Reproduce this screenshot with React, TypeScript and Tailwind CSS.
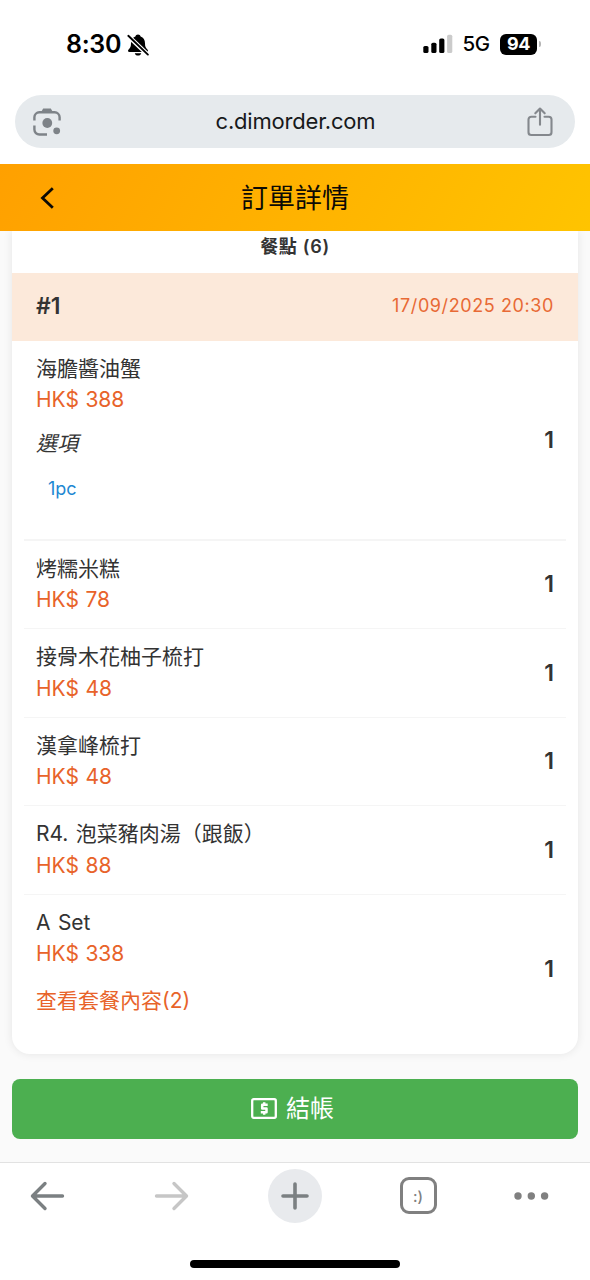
import React from 'react'

type OrderItem = {
  name: string
  price: string
  qty: number
  option?: string
  setLabel?: string
  rowClass: string
}

const items: OrderItem[] = [
  {
    name: '海膽醬油蟹',
    price: 'HK$ 388',
    qty: 1,
    option: '1pc',
    rowClass: 'h-[200px] border-b-2'
  },
  { name: '烤糯米糕', price: 'HK$ 78', qty: 1, rowClass: 'h-[88.5px] border-b' },
  {
    name: '接骨木花柚子梳打',
    price: 'HK$ 48',
    qty: 1,
    rowClass: 'h-[88.5px] border-b'
  },
  {
    name: '漢拿峰梳打',
    price: 'HK$ 48',
    qty: 1,
    rowClass: 'h-[88.5px] border-b'
  },
  {
    name: 'R4. 泡菜豬肉湯（跟飯）',
    price: 'HK$ 88',
    qty: 1,
    rowClass: 'h-[88.5px] border-b'
  },
  {
    name: 'A Set',
    price: 'HK$ 338',
    qty: 1,
    setLabel: '查看套餐內容(2)',
    rowClass: 'h-[148px]'
  }
]

const BellOffIcon = () => (
  <svg width="24" height="24" viewBox="0 0 24 24">
    <path
      fill="#000"
      d="M12 1.4c-1.300 0-2.400.9-2.600 2C6.500 4.500 5 7 5 10.200c0 3.400-.7 4.500-2.400 6.300-1 1.100-.7 2.500.9 2.500h17c1.600 0 1.900-1.400.9-2.500-1.700-1.800-2.400-2.900-2.400-6.300 0-3.200-1.500-5.700-4.400-6.800-.2-1.100-1.300-2-2.600-2zM8.800 20.300c.3 1.500 1.600 2.300 3.200 2.300s2.900-.8 3.200-2.300z"
    />
    <path stroke="#fff" strokeWidth="4.400" d="M1.500 2.300 22.800 22.600" />
    <path stroke="#000" strokeWidth="1.900" strokeLinecap="round" d="M2.300 2.800 21.900 21.600" />
  </svg>
)

const SignalIcon = () => (
  <svg width="30" height="20" viewBox="0 0 30 20">
    <rect x="0.3" y="12" width="5.2" height="7" rx="1.6" />
    <rect x="8.3" y="8.7" width="5.2" height="10.3" rx="1.6" />
    <rect x="16.2" y="4.5" width="5.2" height="14.5" rx="1.6" />
    <rect x="24.1" y="0.7" width="5.2" height="18.3" rx="1.6" fill="#cbcbcb" />
  </svg>
)

const LensIcon = () => (
  <svg width="28" height="28" viewBox="0 0 28 28" fill="none" stroke="#7e8388" strokeWidth="2.4">
    <path d="M1.400 12.500V9.300a5 5 0 0 1 5-5h15.200a5 5 0 0 1 5 5v3.200" />
    <path d="M1.400 17.500v4a5 5 0 0 0 5 5H14" />
    <path d="M8 4.300 10.200.5h7.600L20 4.300z" fill="#7e8388" stroke="none" />
    <circle cx="14.300" cy="15" r="4.900" fill="#7e8388" stroke="none" />
    <circle cx="23.700" cy="22.800" r="3.400" fill="#7e8388" stroke="none" />
  </svg>
)

const ShareIcon = () => (
  <svg
    width="26"
    height="30"
    viewBox="0 0 26 30"
    fill="none"
    stroke="#84888d"
    strokeWidth="2.1"
    strokeLinecap="round"
    strokeLinejoin="round"
  >
    <path d="M8.500 9.700H4.300a2.800 2.800 0 0 0-2.800 2.800v12.700A2.800 2.800 0 0 0 4.300 28h17.400a2.800 2.800 0 0 0 2.800-2.800V12.500a2.800 2.800 0 0 0-2.800-2.800H17.500" />
    <path d="M13 17.800V1.800M8.300 6.300 13 1.500l4.700 4.800" />
  </svg>
)

const StatusBar = () => (
  <div className="flex h-[95px] items-start justify-between pt-[31px] pr-[49px] pl-[66px]">
    <div className="flex h-[27px] items-center gap-[5px]">
      <span className="text-[25px] leading-none font-semibold tracking-[-0.3px]">8:30</span>
      <BellOffIcon />
    </div>
    <div className="flex h-[26px] items-center">
      <SignalIcon />
      <span className="ml-[9px] text-[20.5px] leading-none font-medium tracking-[-0.2px]">5G</span>
      <span className="ml-[10px] flex h-[21px] w-[37px] items-center justify-center rounded-[6px] bg-black text-[18px] leading-none font-bold tracking-[-0.5px] text-white">
        94
      </span>
      <span className="ml-[2px] h-[6px] w-[2px] rounded-r-full bg-[#b5b5b5]" />
    </div>
  </div>
)

const AddressBar = () => (
  <div className="mx-[15px] flex h-[53px] items-center justify-between rounded-full bg-[#e6eaed] pr-[22px] pl-[18px]">
    <LensIcon />
    <span className="pb-[2px] pl-[3px] text-[22px] leading-none tracking-[-0.2px] text-[#17191b]">
      c.dimorder.com
    </span>
    <ShareIcon />
  </div>
)

const PageHeader = () => (
  <header className="mt-[15.5px] flex h-[67.5px] items-center bg-linear-[120deg,#ffa000,#ffc400] px-[36px]">
    <svg width="22" height="25" viewBox="0 0 22 25" fill="none" stroke="#0c0a05" strokeWidth="2.8">
      <path d="M16.800 3.200 6.500 13l10.300 9.800" />
    </svg>
    <h1 className="mr-[22px] flex-1 pt-[2px] text-center text-[27px] leading-none text-[#0c0a05]">
      訂單詳情
    </h1>
  </header>
)

const ItemRow = ({ item }: { item: OrderItem }) => (
  <li
    className={`mx-3 flex items-center justify-between border-[#f5f5f5] px-3 ${item.rowClass}`}
  >
    <div className="h-full pt-[12px] text-[21px] leading-[31.5px]">
      <p className="text-[#333] [word-spacing:1.5px]">{item.name}</p>
      <p className="text-[#e8632a] [word-spacing:0.5px]">{item.price}</p>
      {item.option && (
        <>
          <p className="mt-[12px] text-[#333] italic">選項</p>
          <p className="mt-[14px] ml-[12px] text-[18px] text-[#1e88d2]">{item.option}</p>
        </>
      )}
      {item.setLabel && <p className="mt-[15px] text-[#e8632a]">{item.setLabel}</p>}
    </div>
    <span className="pt-[1px] text-[23px] leading-none font-semibold text-[#333]">{item.qty}</span>
  </li>
)

const OrderCard = () => (
  <section className="mx-3 h-[822.5px] overflow-hidden rounded-b-[18px] bg-white shadow-[0_0_10px_rgba(0,0,0,0.09)]">
    <h2 className="h-[42px] pt-[3px] text-center text-[18px] leading-[26px] font-semibold tracking-[0.7px] text-[#333]">
      餐點 (6)
    </h2>
    <div className="flex h-[67.5px] items-center justify-between bg-[#fce9da] px-6 pb-[1px]">
      <span className="text-[23px] leading-none font-semibold text-[#333]">#1</span>
      <span className="text-[18px] leading-none tracking-[0.6px] text-[#e86a35]">
        17/09/2025 20:30
      </span>
    </div>
    <ul>
      {items.map((item) => (
        <ItemRow key={item.name} item={item} />
      ))}
    </ul>
  </section>
)

const CheckoutButton = () => (
  <button className="mx-3 mt-[25px] flex h-[60px] items-center justify-center gap-[9px] rounded-[8px] bg-[#4caf50] pr-[5px] text-[24px] leading-none text-white">
    <svg width="26" height="21" viewBox="0 0 26 21" fill="none" stroke="#fff">
      <rect x="1.200" y="1.200" width="23.600" height="18.600" rx="1.500" strokeWidth="2.300" />
      <path
        d="M16.700 6.800h-5.500v3.700h4.300v3.700H9.800M13.200 4.300v2.500M13.200 14v2.700"
        strokeWidth="2.500"
        strokeLinejoin="round"
      />
    </svg>
    結帳
  </button>
)

const BottomBar = () => (
  <nav className="flex h-[118px] flex-col items-center border-t border-[#e2e2e2] bg-white">
    <div className="grid h-[65px] w-full grid-cols-[94px_154px_94px_152px_74px] place-items-center">
      <svg
        width="35"
        height="30"
        viewBox="0 0 35 30"
        fill="none"
        stroke="#7b8082"
        strokeWidth="3.4"
        strokeLinecap="round"
        strokeLinejoin="round"
      >
        <path d="M32.500 15H2.800M15 2.500 2.500 15 15 27.500" />
      </svg>
      <svg
        width="35"
        height="30"
        viewBox="0 0 35 30"
        fill="none"
        stroke="#c6c6c6"
        strokeWidth="3.4"
        strokeLinecap="round"
        strokeLinejoin="round"
      >
        <path d="M2.500 15h29.700M20 2.500 32.500 15 20 27.500" />
      </svg>
      <div className="flex size-[54px] items-center justify-center rounded-full bg-[#e8eaed]">
        <svg width="28" height="28" viewBox="0 0 28 28" stroke="#7b8082" strokeWidth="3.6" strokeLinecap="round">
          <path d="M14 2v24M2 14h24" />
        </svg>
      </div>
      <div className="flex size-[37px] items-center justify-center rounded-[9px] border-[3px] border-[#808080] pt-[1px] text-[15px] leading-none font-medium text-[#808080]">
        :)
      </div>
      <svg width="35" height="8" viewBox="0 0 35 8" fill="#808080">
        <circle cx="4" cy="4" r="3.700" />
        <circle cx="17.300" cy="4" r="3.700" />
        <circle cx="30.600" cy="4" r="3.700" />
      </svg>
    </div>
    <div className="mt-[32px] h-[8px] w-[210px] rounded-full bg-black" />
  </nav>
)

const App = () => {
  return (
    <main className="flex h-[1280px] w-[590px] flex-col overflow-hidden bg-white font-[Inter,'Noto_Sans_CJK_TC',sans-serif] text-black">
      <StatusBar />
      <AddressBar />
      <PageHeader />
      <div className="flex flex-1 flex-col overflow-hidden bg-[#fafafa]">
        <OrderCard />
        <CheckoutButton />
      </div>
      <BottomBar />
    </main>
  )
}

export default App
